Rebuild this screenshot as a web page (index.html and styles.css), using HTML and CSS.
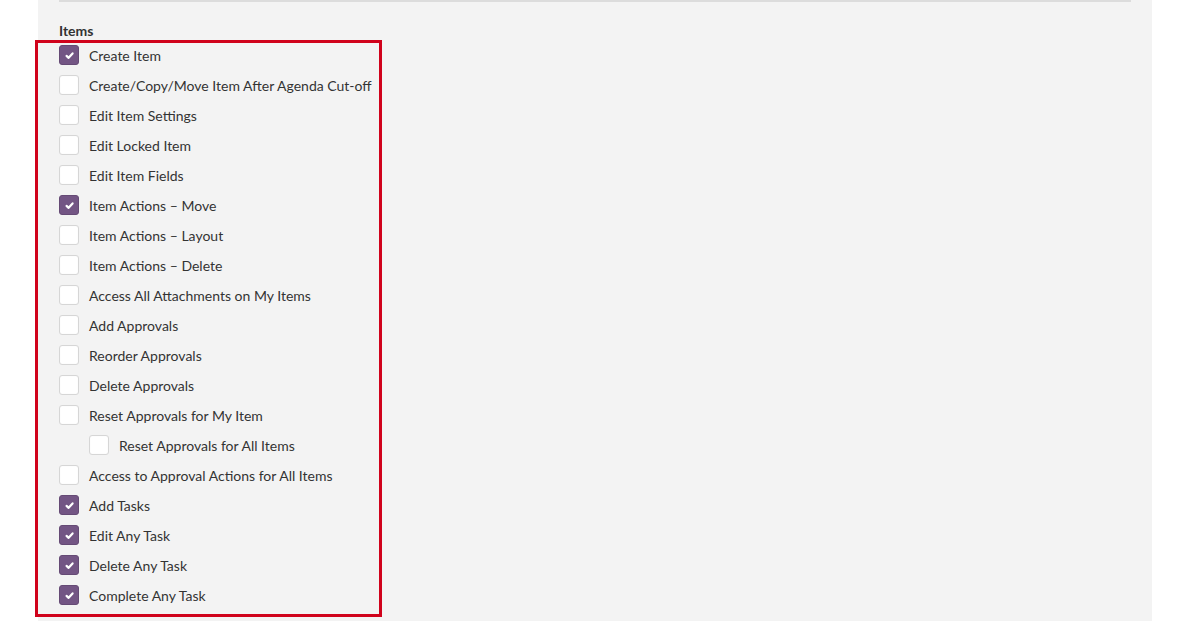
FILE: index.html
```html
<!DOCTYPE html>
<html>
<head>
<meta charset="utf-8">
<link rel="stylesheet" href="styles.css">
</head>
<body>
<div class="panel">
  <div class="divider"></div>
  <div class="section-title">Items</div>
  <ul class="perm-list">
    <li class="row"><span class="cb checked"><svg viewBox="0 0 10 10"><path d="M2.3 5.4 L4.2 7.1 L7.8 3.1"/></svg></span><span class="label">Create Item</span></li>
    <li class="row"><span class="cb"></span><span class="label">Create/Copy/Move Item After Agenda Cut-off</span></li>
    <li class="row"><span class="cb"></span><span class="label">Edit Item Settings</span></li>
    <li class="row"><span class="cb"></span><span class="label">Edit Locked Item</span></li>
    <li class="row"><span class="cb"></span><span class="label">Edit Item Fields</span></li>
    <li class="row"><span class="cb checked"><svg viewBox="0 0 10 10"><path d="M2.3 5.4 L4.2 7.1 L7.8 3.1"/></svg></span><span class="label">Item Actions – Move</span></li>
    <li class="row"><span class="cb"></span><span class="label">Item Actions – Layout</span></li>
    <li class="row"><span class="cb"></span><span class="label">Item Actions – Delete</span></li>
    <li class="row"><span class="cb"></span><span class="label">Access All Attachments on My Items</span></li>
    <li class="row"><span class="cb"></span><span class="label">Add Approvals</span></li>
    <li class="row"><span class="cb"></span><span class="label">Reorder Approvals</span></li>
    <li class="row"><span class="cb"></span><span class="label">Delete Approvals</span></li>
    <li class="row"><span class="cb"></span><span class="label">Reset Approvals for My Item</span></li>
    <li class="row sub"><span class="cb"></span><span class="label">Reset Approvals for All Items</span></li>
    <li class="row"><span class="cb"></span><span class="label">Access to Approval Actions for All Items</span></li>
    <li class="row"><span class="cb checked"><svg viewBox="0 0 10 10"><path d="M2.3 5.4 L4.2 7.1 L7.8 3.1"/></svg></span><span class="label">Add Tasks</span></li>
    <li class="row"><span class="cb checked"><svg viewBox="0 0 10 10"><path d="M2.3 5.4 L4.2 7.1 L7.8 3.1"/></svg></span><span class="label">Edit Any Task</span></li>
    <li class="row"><span class="cb checked"><svg viewBox="0 0 10 10"><path d="M2.3 5.4 L4.2 7.1 L7.8 3.1"/></svg></span><span class="label">Delete Any Task</span></li>
    <li class="row"><span class="cb checked"><svg viewBox="0 0 10 10"><path d="M2.3 5.4 L4.2 7.1 L7.8 3.1"/></svg></span><span class="label">Complete Any Task</span></li>
  </ul>
</div>
</body>
</html>
```
FILE: styles.css
```css
html, body {
  margin: 0;
  padding: 0;
  background: #ffffff;
  height: 100%;
  overflow: hidden;
}
body {
  font-family: Lato, "Open Sans", sans-serif;
  color: #333333;
}
.panel {
  margin-left: 38px;
  width: 1114px;
  min-height: 621px;
  background: #f3f3f3;
  padding: 0 21px;
  box-sizing: border-box;
}
.divider {
  height: 2px;
  background: #dcdcdc;
}
.section-title {
  font-weight: bold;
  font-size: 14px;
  line-height: 16px;
  padding-top: 21px;
  height: 17px;
}
.perm-list {
  list-style: none;
  margin: 0 0 0 -24px;
  padding: 2px 0 1px 21px;
  width: 320px;
  border: 3px solid #d0021b;
}
.row {
  display: flex;
  align-items: center;
  height: 20px;
  margin-bottom: 10px;
  font-size: 14px;
}
.row:last-child {
  margin-bottom: 8px;
}
.row.sub {
  padding-left: 30px;
}
.cb {
  width: 20px;
  height: 20px;
  box-sizing: border-box;
  border: 1px solid #d6d6d6;
  border-radius: 3px;
  background: #ffffff;
  box-shadow: inset 0 0 1px rgba(0,0,0,0.08);
  margin-right: 10px;
  flex: none;
  display: flex;
  align-items: center;
  justify-content: center;
}
.cb.checked {
  background: #735584;
  border-color: #654a75;
  box-shadow: none;
}
.cb svg {
  width: 11px;
  height: 11px;
}
.cb svg path {
  fill: none;
  stroke: #ffffff;
  stroke-width: 2;
  stroke-linecap: round;
  stroke-linejoin: round;
}
.label {
  white-space: nowrap;
}
```
